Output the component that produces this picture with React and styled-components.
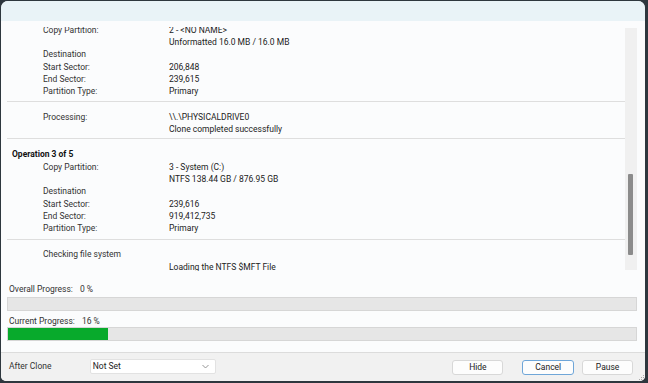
import React from 'react';
import styled, { createGlobalStyle } from 'styled-components';

const GlobalStyle = createGlobalStyle`
    html, body { margin: 0; padding: 0; background: #2e373e; }
    body { font-family: Roboto, "Liberation Sans", sans-serif; font-size: 8.5px; color: #262626; }
`;

// --- frame / window ---
const Frame = styled.div`
    height: 383px; box-sizing: border-box; padding: 1px 3px 2px 1px;
`;
const Window = styled.div`
    height: 100%; display: flex; flex-direction: column;
    background: #fbfcfd; border-radius: 7px 7px 5px 5px; overflow: hidden;
`;
const TitleBand = styled.div`
    height: 20px; flex: none; background: #e9f3f7;
`;

// --- operations list ---
const ListBox = styled.div`
    display: flex; height: 244px; flex: none; margin: 6px 8px 0 6px;
`;
const List = styled.div`
    flex: 1; overflow: hidden;
`;
const ListInner = styled.div`
    margin-top: -4px;
`;
const Section = styled.div`
    padding-top: ${p => p.$top || 0}px; padding-bottom: ${p => p.$bottom || 0}px;
    border-bottom: ${p => p.$line ? '1px solid #dedede' : 'none'};
`;
const Title = styled.div`
    height: 13px; line-height: 14px; padding-left: 5px; font-weight: 700; color: #111;
`;
const Row = styled.div`
    display: flex; height: ${p => p.$h || 12}px; line-height: 14px; padding-left: 36px;
    margin-top: ${p => p.$gap || 0}px; white-space: nowrap;
`;
const Label = styled.span`
    width: 126px; flex: none; color: #333;
`;
const Value = styled.span`
    color: #222;
`;
const ScrollTrack = styled.div`
    width: 12px; flex: none; margin: 1px 0; background: #f0f0f0;
`;
const ScrollThumb = styled.div`
    width: 5px; height: 81px; margin: 146px 0 0 3px; background: #8b8b8b; border-radius: 1px;
`;

// --- progress ---
const ProgressArea = styled.div`
    flex: 1; margin: 0 8px 0 6px; padding-top: 11px;
`;
const ProgressLabel = styled.div`
    display: flex; height: 12px; line-height: 14px; padding-left: 2px; color: #333;
    margin-bottom: ${p => p.$after}px;
`;
const ProgressValue = styled.span`
    margin-left: 7px;
`;
const Bar = styled.div`
    height: 14px; box-sizing: border-box; background: #e6e6e6; border: 1px solid #d6d6d6;
    margin-bottom: 3px; overflow: hidden;
`;
const Fill = styled.div`
    height: 100%; background: #08aa2c;
`;

// --- footer ---
const Footer = styled.div`
    height: 28px; flex: none; display: flex; align-items: center;
    padding: 0 1px 0 8px; background: #f1f1f1; border-top: 1px solid #dcdcdc;
`;
const FooterLabel = styled.span`
    width: 81px; color: #333; margin-top: -2px;
`;
const Select = styled.div`
    width: 127px; height: 15px; box-sizing: border-box; display: flex; align-items: center;
    justify-content: space-between; padding: 0 6px 0 2px; background: #fff;
    border: 1px solid #e2e2e2; border-radius: 2px; color: #222; margin-top: -2px;
`;
const Button = styled.button`
    width: ${p => p.$w || 51}px; height: 15px; padding: 0; margin-left: ${p => p.$ml}px;
    font: inherit; color: #222; background: #fdfdfd; border-radius: 3px;
    border: 1px solid ${p => p.$focus ? '#6fa6d8' : '#d8d8d8'};
`;
const Grip = styled.svg`
    align-self: flex-end; margin: 0 0 1px 6px;
`;

const Chevron = () => (
    <svg width="7" height="5" viewBox="0 0 7 5">
        <path d="M0.5 1 L3.5 4 L6.5 1" fill="none" stroke="#8a8a8a" strokeWidth="0.9" />
    </svg>
);

const DetailRows = ({ rows }) => rows.map(([label, value, gap], i) => (
    <Row key={i} $gap={gap}><Label>{label}</Label><Value>{value}</Value></Row>
));

const App = () => {
    const overall = 0;
    const current = 16;

    return (
        <Frame>
            <GlobalStyle />
            <Window>
                <TitleBand />
                <ListBox>
                    <List>
                        <ListInner>
                            <Section $bottom={5} $line>
                                <DetailRows rows={[
                                    ['Copy Partition:', '2 - <NO NAME>'],
                                    ['', 'Unformatted 16.0 MB / 16.0 MB'],
                                    ['Destination', ''],
                                    ['Start Sector:', '206,848', 1],
                                    ['End Sector:', '239,615'],
                                    ['Partition Type:', 'Primary'],
                                ]} />
                            </Section>
                            <Section $top={8} $bottom={4} $line>
                                <DetailRows rows={[
                                    ['Processing:', '\\\\.\\PHYSICALDRIVE0'],
                                    ['', 'Clone completed successfully'],
                                ]} />
                            </Section>
                            <Section $top={8} $bottom={6} $line>
                                <Title>Operation 3 of 5</Title>
                                <DetailRows rows={[
                                    ['Copy Partition:', '3 - System (C:)'],
                                    ['', 'NTFS 138.44 GB / 876.95 GB'],
                                    ['Destination', ''],
                                    ['Start Sector:', '239,616', 1],
                                    ['End Sector:', '919,412,735'],
                                    ['Partition Type:', 'Primary'],
                                ]} />
                            </Section>
                            <Section $top={7}>
                                <DetailRows rows={[
                                    ['Checking file system', ''],
                                    ['', 'Loading the NTFS $MFT File', 1],
                                ]} />
                            </Section>
                        </ListInner>
                    </List>
                    <ScrollTrack><ScrollThumb /></ScrollTrack>
                </ListBox>

                <ProgressArea>
                    <ProgressLabel $after={3}>Overall Progress:<ProgressValue>{overall} %</ProgressValue></ProgressLabel>
                    <Bar><Fill style={{ width: `${overall}%` }} /></Bar>
                    <ProgressLabel $after={1}>Current Progress:<ProgressValue>{current} %</ProgressValue></ProgressLabel>
                    <Bar><Fill style={{ width: `${current}%` }} /></Bar>
                </ProgressArea>

                <Footer>
                    <FooterLabel>After Clone</FooterLabel>
                    <Select><span>Not Set</span><Chevron /></Select>
                    <Button $ml={236}>Hide</Button>
                    <Button $ml={19} $w={52} $focus>Cancel</Button>
                    <Button $ml={8}>Pause</Button>
                    <Grip width="5" height="5" viewBox="0 0 5 5">
                        <rect x="4" y="0" width="1" height="1" fill="#a8a8a8" />
                        <rect x="2" y="2" width="1" height="1" fill="#a8a8a8" />
                        <rect x="4" y="2" width="1" height="1" fill="#a8a8a8" />
                        <rect x="0" y="4" width="1" height="1" fill="#a8a8a8" />
                        <rect x="2" y="4" width="1" height="1" fill="#a8a8a8" />
                        <rect x="4" y="4" width="1" height="1" fill="#a8a8a8" />
                    </Grip>
                </Footer>
            </Window>
        </Frame>
    );
};

export default App;
